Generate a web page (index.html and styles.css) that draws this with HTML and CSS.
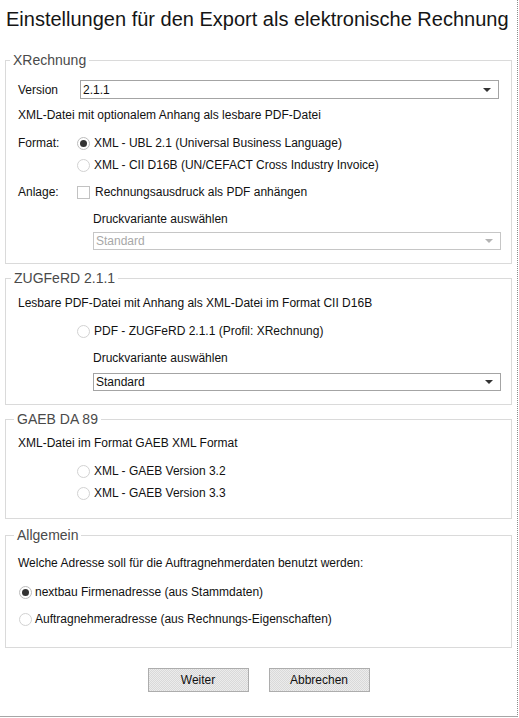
FILE: index.html
```html
<!DOCTYPE html>
<html lang="de">
<head>
<meta charset="utf-8">
<title>Export als elektronische Rechnung</title>
<link rel="stylesheet" href="styles.css">
</head>
<body>
<div class="window">
  <h1 class="title">Einstellungen für den Export als elektronische Rechnung</h1>

  <fieldset class="group g-x">
    <legend class="legend">XRechnung</legend>
    <div class="row r-version">
      <span class="label label-version">Version</span>
      <div class="select select-version"><span class="select-text">2.1.1</span><span class="arrow"></span></div>
    </div>
    <div class="row r-desc-x">XML-Datei mit optionalem Anhang als lesbare PDF-Datei</div>
    <div class="row r-fmt1">
      <span class="label">Format:</span>
      <span class="radio checked"></span><span class="opt">XML - UBL 2.1 (Universal Business Language)</span>
    </div>
    <div class="row r-fmt2">
      <span class="label"></span>
      <span class="radio"></span><span class="opt">XML - CII D16B (UN/CEFACT Cross Industry Invoice)</span>
    </div>
    <div class="row r-anlage">
      <span class="label">Anlage:</span>
      <span class="check"></span><span class="opt opt-check">Rechnungsausdruck als PDF anhängen</span>
    </div>
    <div class="row indent r-druck-x">Druckvariante auswählen</div>
    <div class="select select-wide disabled r-sel-x"><span class="select-text">Standard</span><span class="arrow"></span></div>
  </fieldset>

  <fieldset class="group g-z">
    <legend class="legend legend-z">ZUGFeRD 2.1.1</legend>
    <div class="row r-desc-z">Lesbare PDF-Datei mit Anhang als XML-Datei im Format CII D16B</div>
    <div class="row r-zradio">
      <span class="label"></span>
      <span class="radio"></span><span class="opt">PDF - ZUGFeRD 2.1.1 (Profil: XRechnung)</span>
    </div>
    <div class="row indent r-druck-z">Druckvariante auswählen</div>
    <div class="select select-wide r-sel-z"><span class="select-text">Standard</span><span class="arrow"></span></div>
  </fieldset>

  <fieldset class="group g-g">
    <legend class="legend legend-wide">GAEB DA 89</legend>
    <div class="row r-desc-g">XML-Datei im Format GAEB XML Format</div>
    <div class="row r-g1">
      <span class="label"></span>
      <span class="radio"></span><span class="opt">XML - GAEB Version 3.2</span>
    </div>
    <div class="row r-g2">
      <span class="label"></span>
      <span class="radio"></span><span class="opt">XML - GAEB Version 3.3</span>
    </div>
  </fieldset>

  <fieldset class="group g-a">
    <legend class="legend legend-wide">Allgemein</legend>
    <div class="row r-desc-a">Welche Adresse soll für die Auftragnehmerdaten benutzt werden:</div>
    <div class="row r-a1">
      <span class="radio checked"></span><span class="opt opt-a">nextbau Firmenadresse (aus Stammdaten)</span>
    </div>
    <div class="row r-a2">
      <span class="radio"></span><span class="opt opt-a">Auftragnehmeradresse (aus Rechnungs-Eigenschaften)</span>
    </div>
  </fieldset>

  <div class="buttons">
    <button class="btn" type="button">Weiter</button>
    <button class="btn" type="button">Abbrechen</button>
  </div>
</div>
</body>
</html>
```

FILE: styles.css
```css
html, body {
  margin: 0;
  padding: 0;
  background: #ffffff;
}

body {
  font-family: "Liberation Sans", Arial, sans-serif;
  font-size: 12px;
  color: #111111;
}

.window {
  box-sizing: border-box;
  width: 518px;
  height: 717px;
  border-right: 1px dotted #8c8c8c;
  border-bottom: 1px solid #a6a6a6;
  padding: 0 0 0 5px;
  display: flex;
  flex-direction: column;
}

.title {
  margin: 0;
  padding: 8px 0 0 1px;
  font-size: 20px;
  font-weight: normal;
  line-height: 23px;
  color: #151515;
  white-space: nowrap;
}

.group {
  box-sizing: border-box;
  width: 507px;
  margin: 6px 0 0 0;
  padding: 0 0 0 12px;
  border: 1px solid #dadada;
  min-width: 0;
}

.g-x { margin-top: 21px; padding-bottom: 13px; }
.g-z { padding-bottom: 13px; }
.g-g { padding-bottom: 15px; }
.g-a { margin-top: 8px; padding-bottom: 18px; }

.legend {
  font-size: 14px;
  line-height: 16px;
  color: #4a4a4a;
  padding: 0 3px;
  margin-left: -8px;
}

.legend-z { margin-left: -7px; }
.legend-wide { margin-left: -4px; }

.row {
  display: flex;
  align-items: center;
  height: 20px;
  white-space: nowrap;
}

.label {
  display: inline-block;
  width: 59px;
  flex: none;
}

.label-version { width: 62px; }

.indent { padding-left: 75px; }

.r-version { height: 19px; margin-top: 12px; }
.r-desc-x { margin-top: 6px; }
.r-fmt1 { margin-top: 8px; }
.r-fmt2 { margin-top: 2px; }
.r-anlage { margin-top: 7px; }
.r-druck-x { margin-top: 7px; }
.r-sel-x { margin-top: 3px; }

.r-desc-z { margin-top: 7px; }
.r-zradio { margin-top: 8px; }
.r-druck-z { margin-top: 7px; }
.r-sel-z { margin-top: 5px; }

.r-desc-g { margin-top: 6px; }
.r-g1 { margin-top: 8px; }
.r-g2 { margin-top: 2px; }

.r-desc-a { margin-top: 10px; }
.r-a1 { margin-top: 9px; }
.r-a2 { margin-top: 7px; }

.select {
  box-sizing: border-box;
  display: flex;
  align-items: center;
  justify-content: space-between;
  border: 1px solid #a4a4a4;
  background: #ffffff;
  padding: 0 7px 0 2px;
}

.select-version {
  width: 419px;
  height: 19px;
}

.select-wide {
  width: 408px;
  height: 18px;
  margin-left: 75px;
}

.select-text {
  line-height: 16px;
}

.arrow {
  width: 0;
  height: 0;
  border-left: 4px solid transparent;
  border-right: 4px solid transparent;
  border-top: 4px solid #333333;
}

.disabled {
  border-color: #c6c6c6;
  color: #a8a8a8;
}

.disabled .arrow {
  border-top-color: #b4b4b4;
}

.radio {
  box-sizing: border-box;
  display: inline-flex;
  align-items: center;
  justify-content: center;
  width: 13px;
  height: 13px;
  border: 1px solid #d2d2d2;
  border-radius: 50%;
  background: #ffffff;
  flex: none;
}

.radio.checked {
  border-color: #bdbdbd;
}

.radio.checked::after {
  content: "";
  width: 7px;
  height: 7px;
  border-radius: 50%;
  background: #333333;
}

.check {
  box-sizing: border-box;
  display: inline-block;
  width: 13px;
  height: 13px;
  border: 1px solid #c2c2c2;
  background: #ffffff;
  flex: none;
}

.opt { margin-left: 4px; }
.opt-check { margin-left: 5px; }
.opt-a { margin-left: 3px; }

.r-a1, .r-a2 { padding-left: 1px; }

.buttons {
  display: flex;
  justify-content: center;
  gap: 20px;
  margin-top: 20px;
  padding-right: 5px;
}

.btn {
  box-sizing: border-box;
  width: 101px;
  height: 24px;
  border: 1px solid #adadad;
  background-color: #e3e3e3;
  background-image: repeating-conic-gradient(#d9d9d9 0 25%, #ececec 0 50%);
  background-size: 2px 2px;
  font-family: "Liberation Sans", Arial, sans-serif;
  font-size: 12px;
  color: #111111;
  padding: 0;
}
```
